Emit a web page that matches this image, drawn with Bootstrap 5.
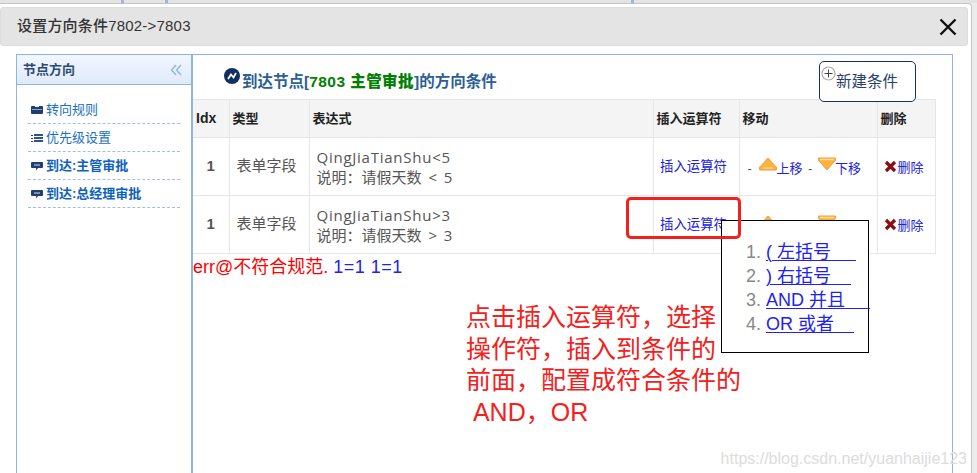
<!DOCTYPE html>
<html lang="zh-CN">
<head>
  <meta charset="UTF-8" />
  <meta name="viewport" content="width=device-width, initial-scale=1.0" />
  <title>设置方向条件</title>
  <link href="https://cdn.jsdelivr.net/npm/bootstrap@5.3.0/dist/css/bootstrap.min.css" rel="stylesheet">
  <style>
    html, body { height: 100%; overflow: hidden; }
    body {
      font-family: "Liberation Sans", "Noto Sans CJK SC", sans-serif;
      font-size: 13px;
      color: #555;
      background: #fff;
    }
    .page-frame { position: relative; width: 977px; height: 473px; overflow: hidden; background: #ececec; }
    .top-strip {
      height: 3px;
      background: #e4e4e4;
      padding-left: 121px;
    }
    .top-strip i { display: block; width: 3px; margin-right: 41px; background: #a3b4d6; }
    .top-strip i:last-child { margin-left: 422px; }
    .dialog-box {
      margin-right: 5px;
      height: 470px;
      background: #fff;
      border-top: 1px solid #c4c4c4;
      border-right: 1px solid #c4c4c4;
      border-top-right-radius: 4px;
      padding-top: 3px;
    }
    .title-bar {
      height: 39px;
      margin-right: 3px;
      padding: 0 10px 0 16px;
      background: #e4e4e4;
      border: 1px solid #dcdcdc;
      border-radius: 3px;
      font-size: 15px;
      font-weight: 500;
      letter-spacing: .2px;
      color: #333;
    }
    .panels { margin: 8px 18px 0 16px; height: 420px; border: solid #8fb4e6; border-width: 1px 1px 0; }
    .side-panel { width: 176px; flex: none; border-right: 2px solid #8fb4e6; }
    .side-head {
      height: 30px;
      padding: 0 9px 0 6px;
      background: linear-gradient(#f2f7fe, #dfeafb);
      border-bottom: 1px solid #8fb4e6;
      font-size: 13px;
      font-weight: bold;
      color: #2b4a73;
    }
    .side-links { padding: 11px 11px 0 11px; }
    .side-links a {
      display: flex;
      align-items: center;
      gap: 3px;
      height: 28px;
      padding: 1px 0 0 3px;
      border-bottom: 1px dashed #9dbfe8;
      color: #1b6fc4;
      text-decoration: none;
    }
    .side-links a.is-bold { font-weight: bold; color: #0d62bd; }
    .main-panel { flex: 1; min-width: 0; }
    .main-head { height: 44px; padding: 0 0 0 31px; }
    .main-title { font-size: 15.5px; font-weight: bold; color: #2c5f93; margin-top: 13px; gap: 2px; }
    .main-title b { color: #008000; letter-spacing: .45px; }
    .main-title span { margin-top: 2px; }
    .new-btn {
      width: 97px;
      height: 41px;
      margin: 6px 36px 0 auto;
      border: 1px solid #17305c;
      border-radius: 5px;
      background: #fff;
      padding: 0 0 0 1px;
      font-size: 15.5px;
      color: #2b3f6b;
      line-height: 1;
    }
    .cond-table {
      width: 742px;
      margin: 0;
      table-layout: fixed;
      border-collapse: collapse;
      font-size: 13px;
    }
    .cond-table th, .cond-table td { border: 1px solid #e6e6e6; padding: 0 3px; vertical-align: middle; box-shadow: none; }
    .cond-table tr > :first-child { border-left: 0; }
    .cond-table thead tr { height: 38px; }
    .cond-table thead th { background: #f4f4f4; color: #222; font-weight: bold; font-size: 13px; }
    .cond-table thead th.idx-head { font-size: 14px; }
    .cond-table tbody tr { height: 58px; }
    .cond-table tbody td { color: #555; }
    .cond-table td.type-cell { border-left: 1px solid #cfcfcf; padding-left: 7px; font-size: 15px; }
    .cond-table td.idx-cell { font-weight: bold; text-align: center; font-size: 15px; }
    .cond-table td.expr-cell {
      padding-left: 7px;
      font-size: 15px;
      line-height: 20px;
      letter-spacing: .75px;
      font-family: "Open Sans", "Noto Sans CJK SC", sans-serif;
    }
    .cond-table td.expr-cell .desc-line { letter-spacing: 0; word-spacing: 3px; }
    .cond-table a { color: #2222dd; text-decoration: none; font-size: 13px; white-space: nowrap; }
    .cond-table td.op-cell { text-align: center; padding: 2px 5px 0 0; }
    .cond-table td.op-cell a { font-size: 13.4px; }
    .cond-table td.move-cell { padding: 2px 0 0 8px; white-space: nowrap; }
    .cond-table td.move-cell a { margin: 0 2px 0 4px; }
    .cond-table td.move-cell a + a { margin-left: 2px; }
    .cond-table td.move-cell svg { vertical-align: 2px; margin-right: -1px; }
    .cond-table td.del-cell { text-align: center; padding: 2px 4px 0 0; }
    .cond-table td.del-cell svg { vertical-align: -1px; }
    .err-line { font-size: 18px; line-height: 26px; color: #f00; white-space: nowrap; }
    .err-line span { color: #2222ee; letter-spacing: .5px; }
    .red-box {
      position: absolute;
      left: 626px;
      top: 197px;
      width: 115px;
      height: 42px;
      border: 3px solid #f4201c;
      border-radius: 5px;
    }
    .op-menu {
      position: absolute;
      left: 721px;
      top: 220px;
      width: 148px;
      height: 133px;
      background: #fff;
      border: 1px solid #000;
      padding: 19px 0 0 44px;
      margin: 0;
      font-size: 18px;
      line-height: 24px;
      color: #888;
    }
    .op-menu a {
      color: #2222ee;
      white-space: pre;
      text-decoration: underline 1px;
      text-underline-offset: 2px;
    }
    .note-text {
      position: absolute;
      left: 466px;
      top: 302px;
      font-size: 25px;
      line-height: 31.7px;
      color: #f4201c;
      white-space: pre;
    }
    .wm-text {
      position: absolute;
      right: 10px;
      bottom: 4px;
      font-size: 16px;
      line-height: 20px;
      color: #dcdcdc;
      white-space: nowrap;
    }
  </style>
</head>
<body>
  <div class="page-frame">
    <div class="top-strip d-flex"><i></i><i></i><i></i></div>
    <div class="dialog-box">
      <div class="title-bar d-flex align-items-center justify-content-between">
        <span>设置方向条件7802-&gt;7803</span>
        <svg width="18" height="18" viewBox="0 0 18 18"><path d="M1.500 1.500 16.500 16.500M16.500 1.500 1.500 16.500" stroke="#111" stroke-width="2.400" fill="none"/></svg>
      </div>
      <div class="panels d-flex">
        <div class="side-panel">
          <div class="side-head d-flex align-items-center justify-content-between">
            <span>节点方向</span>
            <svg width="12" height="12" viewBox="0 0 12 12"><path d="M6 1 1.500 6 6 11M11 1 6.500 6 11 11" stroke="#8fb4e6" stroke-width="1.400" fill="none"/></svg>
          </div>
          <div class="side-links">
            <a href="#"><svg width="12" height="8" viewBox="0 0 12 8"><path d="M1 0h3v1h4V0h3a1 1 0 0 1 1 1v6a1 1 0 0 1-1 1H1a1 1 0 0 1-1-1V1a1 1 0 0 1 1-1z" fill="#1f3f73"/><rect x="1" y="3" width="10" height="1" fill="#8fa3c4"/></svg>转向规则</a>
            <a href="#"><svg width="12" height="8" viewBox="0 0 12 8"><path d="M0 1h2v1H0zM0 4h2v1H0zM0 7h2v1H0z" fill="#1f3f73"/><path d="M3 0h9v2H3zM3 3h9v2H3zM3 6h9v2H3z" fill="#2f5488"/></svg>优先级设置</a>
            <a href="#" class="is-bold"><svg width="12" height="9" viewBox="0 0 12 9"><path d="M1 0h10a1 1 0 0 1 1 1v4a1 1 0 0 1-1 1H7L5 8.500 5 6H1a1 1 0 0 1-1-1V1a1 1 0 0 1 1-1z" fill="#1f3f73"/><rect x="3" y="2.500" width="6" height="1" fill="#cfd9ea"/></svg>到达:主管审批</a>
            <a href="#" class="is-bold"><svg width="12" height="9" viewBox="0 0 12 9"><path d="M1 0h10a1 1 0 0 1 1 1v4a1 1 0 0 1-1 1H7L5 8.500 5 6H1a1 1 0 0 1-1-1V1a1 1 0 0 1 1-1z" fill="#1f3f73"/><rect x="3" y="2.500" width="6" height="1" fill="#cfd9ea"/></svg>到达:总经理审批</a>
          </div>
        </div>
        <div class="main-panel">
          <div class="main-head d-flex">
            <div class="main-title d-flex align-items-start">
              <svg class="flex-shrink-0" width="16" height="16" viewBox="0 0 16 16"><circle cx="8" cy="8" r="8" fill="#12305f"/><path d="M4 11 7 6.500l2.500 3L12 5" stroke="#fff" stroke-width="1.700" fill="none"/></svg>
              <span>到达节点[<b>7803 主管审批</b>]的方向条件</span>
            </div>
            <button class="new-btn d-flex align-items-center" type="button">
              <svg class="align-self-start mt-1 flex-shrink-0" width="15" height="15" viewBox="0 0 15 15"><circle cx="7.500" cy="7.500" r="6.500" fill="#fff" stroke="#aaa" stroke-width="1.200"/><path d="M3.500 7.500h8M7.500 3.500v8" stroke="#444" stroke-width="1"/></svg>
              <span>新建条件</span>
            </button>
          </div>
          <table class="table cond-table">
            <colgroup><col style="width:36px"><col style="width:80px"><col style="width:344px"><col style="width:86px"><col style="width:138px"><col style="width:58px"></colgroup>
            <thead>
              <tr><th class="idx-head">Idx</th><th>类型</th><th>表达式</th><th>插入运算符</th><th>移动</th><th>删除</th></tr>
            </thead>
            <tbody>
              <tr>
                <td class="idx-cell">1</td>
                <td class="type-cell">表单字段</td>
                <td class="expr-cell">QingJiaTianShu&lt;5<br><span class="desc-line">说明：请假天数 &lt; 5</span></td>
                <td class="op-cell"><a href="#">插入运算符</a></td>
                <td class="move-cell">
                  - <a href="#"><svg width="18" height="14" viewBox="0 0 18 14"><path d="M9 1 17 10a1.500 1.500 0 0 1-1 3H2a1.500 1.500 0 0 1-1-3z" fill="#fbb43a" stroke="#f2965a" stroke-linejoin="round"/><path d="M4 11h10" stroke="#ffd77a" stroke-width="1.500"/></svg>上移</a> -
                  <a href="#"><svg width="18" height="14" viewBox="0 0 18 14"><path d="M1.800 1h14.400a1.200 1.200 0 0 1 1 2.500L9 13 .8 3.500a1.200 1.200 0 0 1 1-2.500z" fill="#fbb43a" stroke="#f2965a" stroke-linejoin="round"/><path d="M2 2.500h14" stroke="#ffe08a" stroke-width="1.500"/></svg>下移</a>
                </td>
                <td class="del-cell"><a href="#"><svg width="13" height="13" viewBox="0 0 13 13"><path d="M2 2 11 11M11 2 2 11" stroke="#8b0d12" stroke-width="3.200" fill="none"/></svg>删除</a></td>
              </tr>
              <tr>
                <td class="idx-cell">1</td>
                <td class="type-cell">表单字段</td>
                <td class="expr-cell">QingJiaTianShu&gt;3<br><span class="desc-line">说明：请假天数 &gt; 3</span></td>
                <td class="op-cell"><a href="#">插入运算符</a></td>
                <td class="move-cell">
                  - <a href="#"><svg width="18" height="14" viewBox="0 0 18 14"><path d="M9 1 17 10a1.500 1.500 0 0 1-1 3H2a1.500 1.500 0 0 1-1-3z" fill="#fbb43a" stroke="#f2965a" stroke-linejoin="round"/><path d="M4 11h10" stroke="#ffd77a" stroke-width="1.500"/></svg>上移</a> -
                  <a href="#"><svg width="18" height="14" viewBox="0 0 18 14"><path d="M1.800 1h14.400a1.200 1.200 0 0 1 1 2.500L9 13 .8 3.500a1.200 1.200 0 0 1 1-2.500z" fill="#fbb43a" stroke="#f2965a" stroke-linejoin="round"/><path d="M2 2.500h14" stroke="#ffe08a" stroke-width="1.500"/></svg>下移</a>
                </td>
                <td class="del-cell"><a href="#"><svg width="13" height="13" viewBox="0 0 13 13"><path d="M2 2 11 11M11 2 2 11" stroke="#8b0d12" stroke-width="3.200" fill="none"/></svg>删除</a></td>
              </tr>
            </tbody>
          </table>
          <div class="err-line">err@不符合规范. <span>1=1 1=1</span></div>
        </div>
      </div>
    </div>
    <ol class="op-menu">
      <li><a href="#">( 左括号     </a></li>
      <li><a href="#">) 右括号    </a></li>
      <li><a href="#">AND 并且     </a></li>
      <li><a href="#">OR 或者    </a></li>
    </ol>
    <div class="red-box"></div>
    <div class="note-text">点击插入运算符，选择
操作符，插入到条件的
前面，配置成符合条件的
 AND，OR</div>
    <div class="wm-text">https://blog.csdn.net/yuanhaijie123</div>
  </div>
  <script src="https://cdn.jsdelivr.net/npm/bootstrap@5.3.0/dist/js/bootstrap.bundle.min.js"></script>
</body>
</html>
